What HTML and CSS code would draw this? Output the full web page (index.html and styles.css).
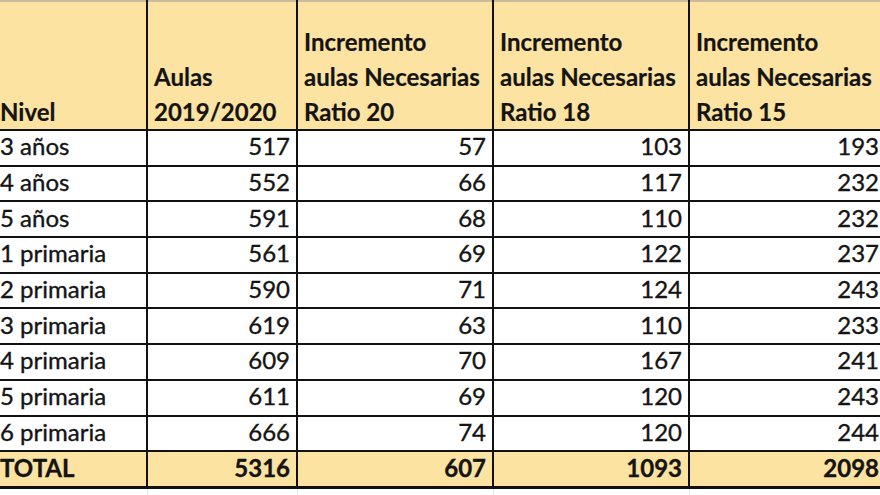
FILE: index.html
```html
<!DOCTYPE html>
<html lang="es">
<head>
<meta charset="utf-8">
<title>Aulas</title>
<link rel="stylesheet" href="styles.css">
</head>
<body>
<table class="sheet">
  <colgroup>
    <col class="c1"><col class="c2"><col class="c3"><col class="c4"><col class="c5">
  </colgroup>
  <thead>
    <tr class="head">
      <th class="first">Nivel</th>
      <th>Aulas<br>2019/2020</th>
      <th>Incremento<br>aulas Necesarias<br>Ratio 20</th>
      <th>Incremento<br>aulas Necesarias<br>Ratio 18</th>
      <th>Incremento<br>aulas Necesarias<br>Ratio 15</th>
    </tr>
  </thead>
  <tbody>
    <tr><td class="first">3 años</td><td>517</td><td>57</td><td>103</td><td>193</td></tr>
    <tr><td class="first">4 años</td><td>552</td><td>66</td><td>117</td><td>232</td></tr>
    <tr><td class="first">5 años</td><td>591</td><td>68</td><td>110</td><td>232</td></tr>
    <tr><td class="first">1 primaria</td><td>561</td><td>69</td><td>122</td><td>237</td></tr>
    <tr><td class="first">2 primaria</td><td>590</td><td>71</td><td>124</td><td>243</td></tr>
    <tr><td class="first">3 primaria</td><td>619</td><td>63</td><td>110</td><td>233</td></tr>
    <tr><td class="first">4 primaria</td><td>609</td><td>70</td><td>167</td><td>241</td></tr>
    <tr><td class="first">5 primaria</td><td>611</td><td>69</td><td>120</td><td>243</td></tr>
    <tr><td class="first">6 primaria</td><td>666</td><td>74</td><td>120</td><td>244</td></tr>
    <tr class="total"><td class="first">TOTAL</td><td>5316</td><td>607</td><td>1093</td><td>2098</td></tr>
    <tr class="after"><td class="first"></td><td></td><td></td><td></td><td></td></tr>
  </tbody>
</table>
</body>
</html>
```

FILE: styles.css
```css
html, body {
  margin: 0;
  padding: 0;
  background: #ffffff;
  overflow: hidden;
  width: 880px;
  height: 495px;
}

.sheet {
  border-collapse: collapse;
  table-layout: fixed;
  width: 886px;
  font-family: "Lato", "Open Sans", sans-serif;
  font-size: 24px;
  color: #141414;
  border-top: 2px solid #c9bb9c;
  -webkit-text-stroke: 0.35px #141414;
}

.c1 { width: 147px; }
.c2 { width: 150px; }
.c3 { width: 196px; }
.c4 { width: 196px; }
.c5 { width: 197px; }

.sheet th,
.sheet td {
  border: 2px solid #111111;
  padding: 0 6px 3px 6px;
  white-space: nowrap;
  overflow: hidden;
}

.sheet .first {
  border-left: none;
  padding-left: 0;
}

.head th {
  height: 127px;
  background: #fce3a2;
  text-align: left;
  vertical-align: bottom;
  font-weight: 700;
  line-height: 35px;
  padding-bottom: 0;
  border-top: none;
  -webkit-text-stroke: 0.2px #141414;
}

.sheet td {
  height: 30.7px;
  text-align: right;
  vertical-align: middle;
  line-height: 30px;
}

.sheet td.first {
  text-align: left;
}

.total td {
  background: #fce3a2;
  font-weight: 700;
  border-bottom: 3px solid #111111;
}

.after td {
  height: 10px;
  padding: 0;
  border: none;
  border-left: 1px solid #e3e3e3;
}

.after td.first {
  border-left: none;
}
```
